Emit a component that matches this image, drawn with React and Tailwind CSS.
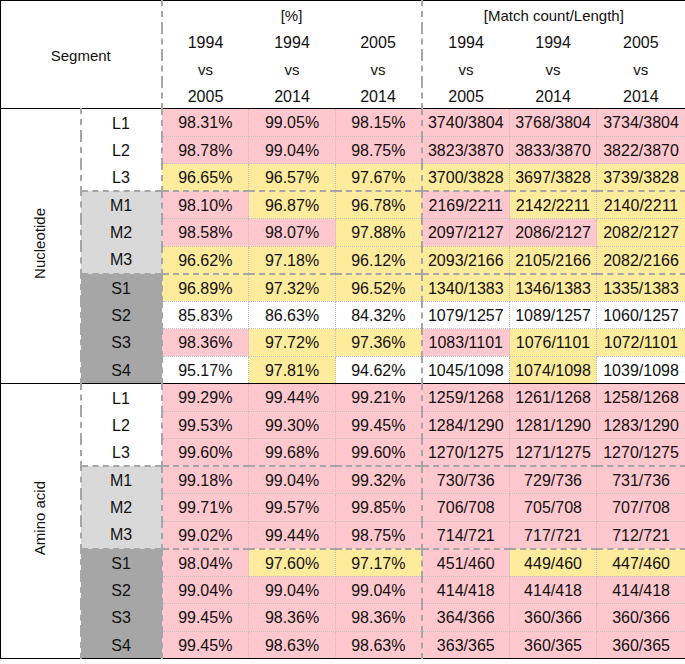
const P = "bg-[#ffc7ce]";
const Y = "bg-[#ffeb9c]";
const W = "bg-white";

const groups = [
  {
    name: "Nucleotide",
    rows: [
      ["L1", ["98.31%", "99.05%", "98.15%"], ["3740/3804", "3768/3804", "3734/3804"], [P, P, P, P, P, P]],
      ["L2", ["98.78%", "99.04%", "98.75%"], ["3823/3870", "3833/3870", "3822/3870"], [P, P, P, P, P, P]],
      ["L3", ["96.65%", "96.57%", "97.67%"], ["3700/3828", "3697/3828", "3739/3828"], [Y, Y, Y, Y, Y, Y]],
      ["M1", ["98.10%", "96.87%", "96.78%"], ["2169/2211", "2142/2211", "2140/2211"], [P, Y, Y, P, Y, Y]],
      ["M2", ["98.58%", "98.07%", "97.88%"], ["2097/2127", "2086/2127", "2082/2127"], [P, P, Y, P, P, Y]],
      ["M3", ["96.62%", "97.18%", "96.12%"], ["2093/2166", "2105/2166", "2082/2166"], [Y, Y, Y, Y, Y, Y]],
      ["S1", ["96.89%", "97.32%", "96.52%"], ["1340/1383", "1346/1383", "1335/1383"], [Y, Y, Y, Y, Y, Y]],
      ["S2", ["85.83%", "86.63%", "84.32%"], ["1079/1257", "1089/1257", "1060/1257"], [W, W, W, W, W, W]],
      ["S3", ["98.36%", "97.72%", "97.36%"], ["1083/1101", "1076/1101", "1072/1101"], [P, Y, Y, P, Y, Y]],
      ["S4", ["95.17%", "97.81%", "94.62%"], ["1045/1098", "1074/1098", "1039/1098"], [W, Y, W, W, Y, W]],
    ],
  },
  {
    name: "Amino acid",
    rows: [
      ["L1", ["99.29%", "99.44%", "99.21%"], ["1259/1268", "1261/1268", "1258/1268"], [P, P, P, P, P, P]],
      ["L2", ["99.53%", "99.30%", "99.45%"], ["1284/1290", "1281/1290", "1283/1290"], [P, P, P, P, P, P]],
      ["L3", ["99.60%", "99.68%", "99.60%"], ["1270/1275", "1271/1275", "1270/1275"], [P, P, P, P, P, P]],
      ["M1", ["99.18%", "99.04%", "99.32%"], ["730/736", "729/736", "731/736"], [P, P, P, P, P, P]],
      ["M2", ["99.71%", "99.57%", "99.85%"], ["706/708", "705/708", "707/708"], [P, P, P, P, P, P]],
      ["M3", ["99.02%", "99.44%", "98.75%"], ["714/721", "717/721", "712/721"], [P, P, P, P, P, P]],
      ["S1", ["98.04%", "97.60%", "97.17%"], ["451/460", "449/460", "447/460"], [P, Y, Y, P, Y, Y]],
      ["S2", ["99.04%", "99.04%", "99.04%"], ["414/418", "414/418", "414/418"], [P, P, P, P, P, P]],
      ["S3", ["99.45%", "98.36%", "98.36%"], ["364/366", "360/366", "360/366"], [P, P, P, P, P, P]],
      ["S4", ["99.45%", "98.63%", "98.63%"], ["363/365", "360/365", "360/365"], [P, P, P, P, P, P]],
    ],
  },
];

const segBg = (s) =>
  s.startsWith("M") ? "bg-[#d9d9d9]" : s.startsWith("S") ? "bg-[#a6a6a6]" : "bg-white";

// one class per side so nothing fights over the shorthand
const T_BLACK = "[border-top:1px_solid_#000]";
const T_DASH = "[border-top:2px_dashed_#a6a6a6]";
const T_DOT = "[border-top:1px_dotted_#bfbfbf]";
const B_BLACK = "[border-bottom:1px_solid_#000]";
const B_DOT = "[border-bottom:1px_dotted_#bfbfbf]";
const L_BLACK = "[border-left:1px_solid_#000]";
const L_DASH = "[border-left:2px_dashed_#a6a6a6]";
const L_DOT = "[border-left:1px_dotted_#bfbfbf]";
const R_BLACK = "[border-right:1px_solid_#000]";
const R_DASH = "[border-right:2px_dashed_#a6a6a6]";
const R_DOT = "[border-right:1px_dotted_#bfbfbf]";

export default function App() {
  return (
    <div className="w-[685px] h-[664px] bg-white font-['Liberation_Sans',Arial,sans-serif] text-[16px] leading-5 text-[#111]">
      <table className="w-[685px] table-fixed border-collapse">
        <colgroup>
          <col className="w-[80px]" />
          <col className="w-[81px]" />
          <col className="w-[87px]" />
          <col className="w-[87px]" />
          <col className="w-[86px]" />
          <col className="w-[88px]" />
          <col className="w-[87px]" />
          <col className="w-[89px]" />
        </colgroup>
        <thead>
          <tr className="h-[27px]">
            <th
              colSpan={2}
              rowSpan={4}
              className={`font-normal text-[15px] p-0 pt-[2px] ${T_BLACK} ${L_BLACK} ${B_BLACK} ${R_DASH}`}
            >
              Segment
            </th>
            <th colSpan={3} className={`font-normal text-[15px] p-0 pt-[4px] ${T_BLACK} ${R_DASH}`}>
              [%]
            </th>
            <th colSpan={3} className={`font-normal text-[15px] p-0 pt-[4px] ${T_BLACK} ${R_BLACK}`}>
              [Match count/Length]
            </th>
          </tr>
          {[
            ["1994", "1994", "2005"],
            ["vs", "vs", "vs"],
            ["2005", "2014", "2014"],
          ].map((r, ri) => (
            <tr key={ri} className="h-[27px]">
              {[...r, ...r].map((t, ci) => (
                <th
                  key={ci}
                  className={`font-normal p-0 pt-[4px] ${ri === 1 ? "text-[15px]" : ""} ${ci === 2 ? R_DASH : ""} ${
                    ci === 5 ? R_BLACK : ""
                  } ${ri === 2 ? B_BLACK : ""}`}
                >
                  {t}
                </th>
              ))}
            </tr>
          ))}
        </thead>
        <tbody>
          {groups.map((g, gi) =>
            g.rows.map(([seg, pcts, counts, colors], ri) => {
              const first = ri === 0;
              const topDash = ri === 3 || ri === 6;
              const last = gi === groups.length - 1 && ri === 9;
              const top = first ? T_BLACK : topDash ? T_DASH : T_DOT;
              return (
                <tr key={`${gi}-${ri}`} className="h-[27.5px]">
                  {first && (
                    <td
                      rowSpan={10}
                      className={`p-0 text-center text-[15px] ${T_BLACK} ${L_BLACK} ${R_DASH} ${gi === 1 ? B_BLACK : ""}`}
                    >
                      <span className="inline-block [writing-mode:vertical-rl] rotate-180">{g.name}</span>
                    </td>
                  )}
                  <td
                    className={`p-0 pt-[2px] text-center ${segBg(seg)} ${L_DASH} ${R_DASH} ${
                      first ? T_BLACK : topDash ? T_DASH : ""
                    } ${last ? B_BLACK : ""}`}
                  >
                    {seg}
                  </td>
                  {[...pcts, ...counts].map((v, ci) => (
                    <td
                      key={ci}
                      className={`p-0 pt-[2px] text-center ${colors[ci]} ${top} ${last ? B_BLACK : B_DOT} ${
                        ci === 0 || ci === 3 ? L_DASH : L_DOT
                      } ${ci === 5 ? R_BLACK : ci === 2 ? R_DASH : R_DOT}`}
                    >
                      {v}
                    </td>
                  ))}
                </tr>
              );
            })
          )}
        </tbody>
      </table>
    </div>
  );
}
